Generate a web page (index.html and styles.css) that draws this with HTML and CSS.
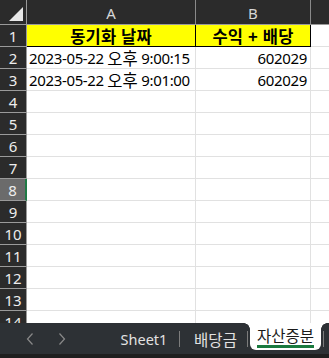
FILE: index.html
```html
<!DOCTYPE html>
<html lang="ko">
<head>
<meta charset="utf-8">
<link rel="stylesheet" href="styles.css">
</head>
<body>
<div class="app">
  <div class="sheet">
    <div class="grid">
      <div class="corner"><svg width="26" height="24" viewBox="0 0 26 24"><polygon points="9,21 23,21 23,7" fill="#e8e8e8"/></svg></div>
      <div class="colh">A</div>
      <div class="colh">B</div>
      <div class="colh"></div>

      <div class="rowh">1</div><div class="cell hdr">동기화 날짜</div><div class="cell hdr">수익 + 배당</div><div class="cell"></div>
      <div class="rowh">2</div><div class="cell">2023-05-22 <span class="ko">오후</span> 9:00:15</div><div class="cell num">602029</div><div class="cell"></div>
      <div class="rowh">3</div><div class="cell">2023-05-22 <span class="ko">오후</span> 9:01:00</div><div class="cell num">602029</div><div class="cell"></div>
      <div class="rowh">4</div><div class="cell"></div><div class="cell"></div><div class="cell"></div>
      <div class="rowh">5</div><div class="cell"></div><div class="cell"></div><div class="cell"></div>
      <div class="rowh">6</div><div class="cell"></div><div class="cell"></div><div class="cell"></div>
      <div class="rowh">7</div><div class="cell"></div><div class="cell"></div><div class="cell"></div>
      <div class="rowh active">8</div><div class="cell"></div><div class="cell"></div><div class="cell"></div>
      <div class="rowh">9</div><div class="cell"></div><div class="cell"></div><div class="cell"></div>
      <div class="rowh">10</div><div class="cell"></div><div class="cell"></div><div class="cell"></div>
      <div class="rowh">11</div><div class="cell"></div><div class="cell"></div><div class="cell"></div>
      <div class="rowh">12</div><div class="cell"></div><div class="cell"></div><div class="cell"></div>
      <div class="rowh">13</div><div class="cell"></div><div class="cell"></div><div class="cell"></div>
      <div class="rowh">14</div><div class="cell"></div><div class="cell"></div><div class="cell"></div>
    </div>
  </div>
  <div class="tabbar">
    <div class="nav">
      <svg class="arrow" width="8" height="14" viewBox="0 0 8 14"><polyline points="6.5,1.5 1.5,7 6.5,12.5" fill="none" stroke="#8a8a8a" stroke-width="1.2"/></svg>
      <svg class="arrow second" width="8" height="14" viewBox="0 0 8 14"><polyline points="1.5,1.5 6.5,7 1.5,12.5" fill="none" stroke="#8a8a8a" stroke-width="1.2"/></svg>
    </div>
    <div class="tab t1">Sheet1</div>
    <div class="sep"></div>
    <div class="tab t2 ko-tab">배당금</div>
    <div class="sep"></div>
    <div class="tab current"><span class="label">자산증분</span></div>
    <div class="sep last"></div>
  </div>
  <div class="bottom"></div>
</div>
</body>
</html>
```

FILE: styles.css
```css
html, body {
  margin: 0;
  padding: 0;
  background: #ffffff;
}
.app {
  width: 329px;
  height: 358px;
  overflow: hidden;
  font-family: "Noto Sans", "Noto Sans CJK KR", sans-serif;
}
.sheet {
  height: 323px;
  overflow: hidden;
  background: #ffffff;
}
.grid {
  display: grid;
  grid-template-columns: 27px 169px 115px 30px;
  grid-template-rows: 25px repeat(14, 22px);
}
.grid > div {
  box-sizing: border-box;
}
.corner {
  background: #2b2b2b;
  border-right: 1px solid #9a9a9a;
  border-bottom: 1px solid #9a9a9a;
}
.corner svg {
  display: block;
}
.colh {
  background: #2b2b2b;
  color: #d6d6d6;
  font-size: 15px;
  line-height: 20px;
  display: flex;
  align-items: center;
  justify-content: center;
  border-right: 1px solid #8a8a8a;
  border-bottom: 1px solid #9a9a9a;
  padding-top: 1px;
}
.rowh {
  background: #2b2b2b;
  color: #ededed;
  font-size: 15px;
  line-height: 20px;
  display: flex;
  align-items: center;
  justify-content: center;
  border-right: 1px solid #9a9a9a;
  border-bottom: 1px solid #9a9a9a;
}
.rowh.active {
  background: #6b6b6b;
  border-right: 2px solid #1f7a45;
}
.cell {
  border-right: 1px solid #e1e1e1;
  border-bottom: 1px solid #e1e1e1;
  font-size: 15px;
  line-height: 20px;
  letter-spacing: -0.35px;
  color: #000000;
  display: flex;
  align-items: center;
  padding: 0 2px;
  white-space: pre;
  overflow: hidden;
}
.ko {
  font-family: "Noto Sans CJK KR", sans-serif;
  font-size: 16.5px;
  line-height: 20px;
  letter-spacing: 0;
}
.cell.hdr {
  background: #ffff00;
  font-family: "Noto Sans CJK KR", sans-serif;
  font-size: 16.5px;
  letter-spacing: 0.2px;
  font-weight: bold;
  justify-content: center;
  overflow: visible;
  border-right: 1px solid #000000;
  border-bottom: 1px solid #000000;
}
.cell.num {
  justify-content: flex-end;
  padding-right: 3px;
}
.tabbar {
  height: 31px;
  background: #2d3135;
  display: flex;
  align-items: center;
  color: #e2e2e2;
  font-size: 14.5px;
}
.nav {
  width: 105px;
  display: flex;
  align-items: center;
}
.arrow {
  display: block;
  margin-left: 26px;
}
.arrow.second {
  margin-left: 24px;
}
.tab {
  display: flex;
  align-items: center;
  justify-content: center;
  box-sizing: border-box;
  height: 100%;
}
.t1 {
  width: 74px;
  padding-left: 4px;
}
.t2 {
  width: 67px;
  padding-left: 4px;
}
.ko-tab {
  font-family: "Noto Sans CJK KR", sans-serif;
  font-size: 15.5px;
}
.sep {
  width: 1px;
  height: 16px;
  background: #7c7c7c;
}
.tab.current {
  position: relative;
  align-self: flex-start;
  height: 27px;
  width: 71px;
  margin-left: 2px;
  margin-right: 2px;
  background: #ffffff;
  border-radius: 0 0 6px 6px;
  color: #1a1a1a;
  font-family: "Noto Sans CJK KR", sans-serif;
  font-size: 15.5px;
  align-items: flex-start;
  padding-top: 3px;
}
.tab.current::before,
.tab.current::after {
  content: "";
  position: absolute;
  top: 0;
  width: 6px;
  height: 6px;
}
.tab.current::before {
  left: -6px;
  background: radial-gradient(circle at 0 100%, #2d3135 5.5px, #ffffff 6px);
}
.tab.current::after {
  right: -6px;
  background: radial-gradient(circle at 100% 100%, #2d3135 5.5px, #ffffff 6px);
}
.label {
  line-height: 18px;
  padding-bottom: 1px;
  border-bottom: 3px solid #1a7a3f;
}
.bottom {
  height: 4px;
  background: #1f1f1f;
}
```
